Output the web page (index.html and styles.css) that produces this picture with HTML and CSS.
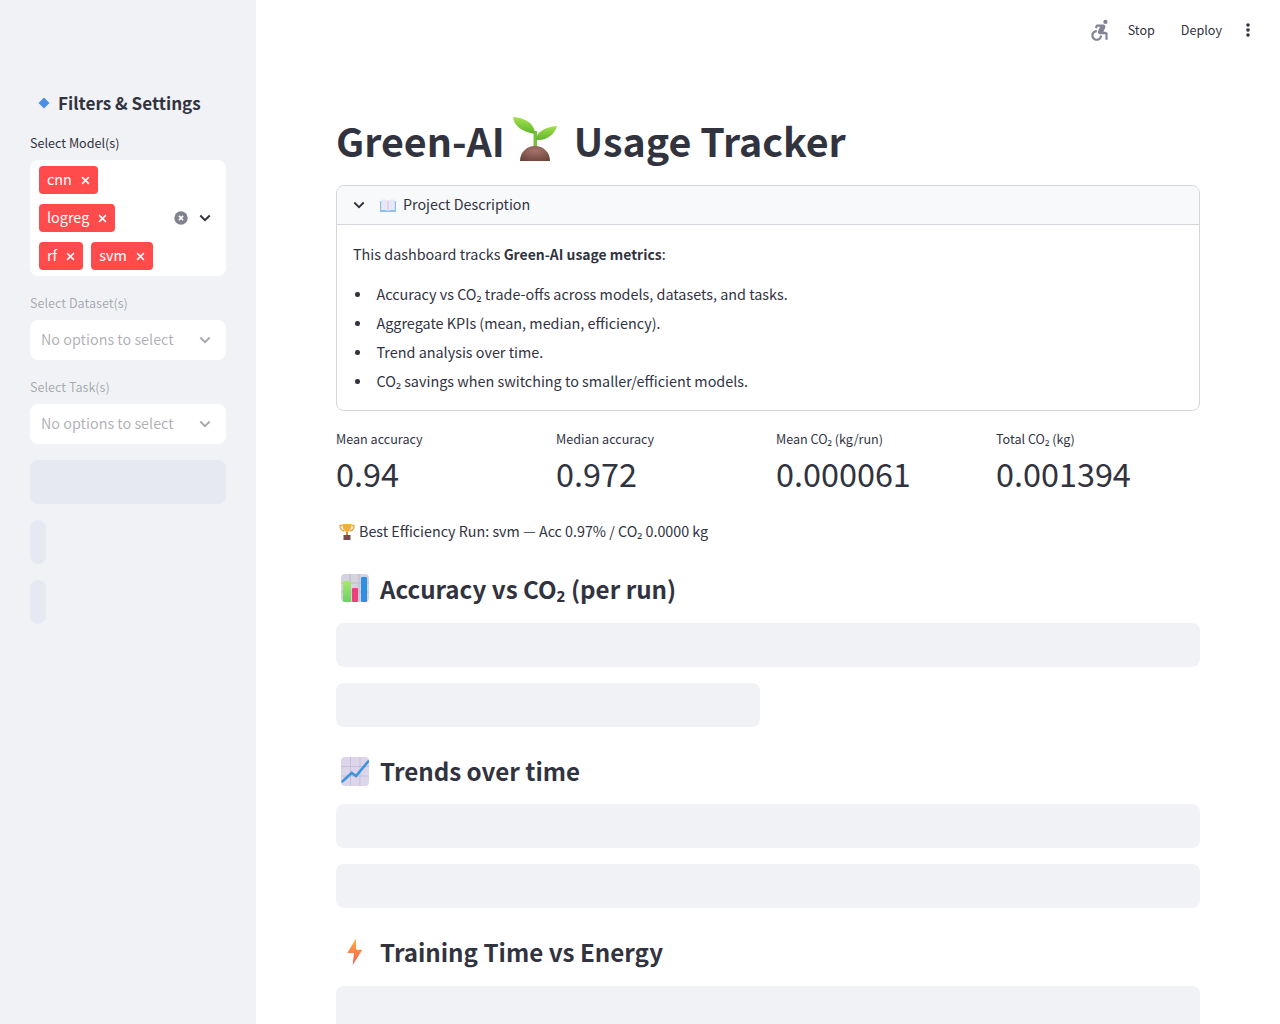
FILE: index.html
```html
<!DOCTYPE html>
<html lang="en">
<head>
    <meta charset="UTF-8">
    <title>Green-AI Usage Tracker</title>
    <link rel="stylesheet" href="styles.css">
</head>
<body>
<div class="app">
    <aside class="sidebar">
        <h2 class="side-title">
            <svg class="diamond" width="12" height="12" viewBox="0 0 12 12"><path d="M6 .5 11.500 6 6 11.500.5 6z" fill="#4a8fe7"/></svg>
            Filters &amp; Settings
        </h2>

        <div class="field">
            <label class="field-label">Select Model(s)</label>
            <div class="select select-multi">
                <div class="tags">
                    <div class="tag-row"><span class="tag">cnn<svg class="tag-x" width="9" height="9" viewBox="0 0 8 8"><path d="M1 1l6 6M7 1L1 7" stroke="#fff" stroke-width="1.300"/></svg></span></div>
                    <div class="tag-row"><span class="tag">logreg<svg class="tag-x" width="9" height="9" viewBox="0 0 8 8"><path d="M1 1l6 6M7 1L1 7" stroke="#fff" stroke-width="1.300"/></svg></span></div>
                    <div class="tag-row">
                        <span class="tag">rf<svg class="tag-x" width="9" height="9" viewBox="0 0 8 8"><path d="M1 1l6 6M7 1L1 7" stroke="#fff" stroke-width="1.300"/></svg></span>
                        <span class="tag">svm<svg class="tag-x" width="9" height="9" viewBox="0 0 8 8"><path d="M1 1l6 6M7 1L1 7" stroke="#fff" stroke-width="1.300"/></svg></span>
                    </div>
                </div>
                <svg class="clear" width="14" height="14" viewBox="0 0 14 14"><circle cx="7" cy="7" r="6.700" fill="#80828f"/><path d="M4.900 4.900l4.200 4.200M9.100 4.900l-4.200 4.200" stroke="#fff" stroke-width="1.500" fill="none"/></svg>
                <svg class="chev" width="12" height="8" viewBox="0 0 12 8"><path d="M1.300 1.500 6 6.200l4.700-4.700" stroke="#31333f" stroke-width="2" fill="none"/></svg>
            </div>
        </div>

        <div class="field disabled">
            <label class="field-label">Select Dataset(s)</label>
            <div class="select">
                <span>No options to select</span>
                <svg class="chev" width="12" height="8" viewBox="0 0 12 8"><path d="M1.300 1.500 6 6.200l4.700-4.700" stroke="#a9aab1" stroke-width="2" fill="none"/></svg>
            </div>
        </div>

        <div class="field disabled">
            <label class="field-label">Select Task(s)</label>
            <div class="select">
                <span>No options to select</span>
                <svg class="chev" width="12" height="8" viewBox="0 0 12 8"><path d="M1.300 1.500 6 6.200l4.700-4.700" stroke="#a9aab1" stroke-width="2" fill="none"/></svg>
            </div>
        </div>

        <div class="side-skeleton"></div>
        <div class="side-skeleton small"></div>
        <div class="side-skeleton small"></div>
    </aside>

    <div class="content">
        <header class="toolbar">
            <svg class="running" width="26" height="26" viewBox="0 0 24 24" fill="#808495"><circle cx="17" cy="4.540" r="2"/><path d="M14 17h-2c0 1.650-1.350 3-3 3s-3-1.350-3-3 1.350-3 3-3v-2c-2.760 0-5 2.240-5 5s2.240 5 5 5 5-2.240 5-5zm3-3.500h-1.860l1.670-3.670C17.420 8.500 16.440 7 14.960 7h-5.200c-.81 0-1.540.47-1.870 1.200L7.220 10l1.920.53L9.790 9H12l-1.830 4.100c-.6 1.330.39 2.900 1.850 2.900H17v5h2v-5.500c0-1.100-.9-2-2-2z"/></svg>
            <span class="tool stop">Stop</span>
            <span class="tool deploy">Deploy</span>
            <svg class="kebab" width="4" height="14" viewBox="0 0 4 14" fill="#31333f"><circle cx="2" cy="2" r="1.800"/><circle cx="2" cy="7" r="1.800"/><circle cx="2" cy="12" r="1.800"/></svg>
        </header>

        <main class="main">
            <h1 class="title">
                Green-AI
                <svg class="seedling" width="44" height="44" viewBox="0 0 44 44">
                    <defs>
                        <linearGradient id="leaf" x1="0" y1="0" x2="0" y2="1"><stop offset="0" stop-color="#a4e04c"/><stop offset="1" stop-color="#5fb52f"/></linearGradient>
                        <radialGradient id="soil" cx=".5" cy=".3" r=".8"><stop offset="0" stop-color="#a5746a"/><stop offset="1" stop-color="#6b4238"/></radialGradient>
                    </defs>
                    <path d="M20.500 14h3.500v18h-3.500z" fill="#79c23a"/>
                    <path d="M22 17C22 7 12 .5 0 0c1 9 9 15 22 17z" fill="url(#leaf)"/>
                    <path d="M23 23c0-8 9-13 21-14-2 8-10 15-21 14z" fill="url(#leaf)"/>
                    <path d="M7 44c0-9 7-15 15-15s15 6 15 15z" fill="url(#soil)"/>
                </svg>
                Usage Tracker
            </h1>

            <section class="expander">
                <div class="expander-head">
                    <svg width="12" height="8" viewBox="0 0 12 8"><path d="M1.300 1.500 6 6.200l4.700-4.700" stroke="#31333f" stroke-width="1.800" fill="none"/></svg>
                    <svg class="book" width="16" height="13" viewBox="0 0 16 13">
                        <path d="M0 2h16v11H0z" fill="#8cc0ec"/>
                        <path d="M1.200 .8C4 .3 6.800.6 8 1.800 9.200.6 12 .3 14.800.8v10.400c-2.800-.4-5.600-.2-6.800 1-1.200-1.200-4-1.400-6.800-1z" fill="#ebe7f6"/>
                        <path d="M7.700 1.800h.6v10.400h-.6z" fill="#b9b2cf"/>
                    </svg>
                    <span>Project Description</span>
                </div>
                <div class="expander-body">
                    <p>This dashboard tracks <strong>Green-AI usage metrics</strong>:</p>
                    <ul>
                        <li>Accuracy vs CO₂ trade-offs across models, datasets, and tasks.</li>
                        <li>Aggregate KPIs (mean, median, efficiency).</li>
                        <li>Trend analysis over time.</li>
                        <li>CO₂ savings when switching to smaller/efficient models.</li>
                    </ul>
                </div>
            </section>

            <section class="metrics">
                <div class="metric"><div class="metric-label">Mean accuracy</div><div class="metric-value">0.94</div></div>
                <div class="metric"><div class="metric-label">Median accuracy</div><div class="metric-value">0.972</div></div>
                <div class="metric"><div class="metric-label">Mean CO₂ (kg/run)</div><div class="metric-value">0.000061</div></div>
                <div class="metric"><div class="metric-label">Total CO₂ (kg)</div><div class="metric-value">0.001394</div></div>
            </section>

            <p class="best">
                <svg width="16" height="17" viewBox="0 0 16 17">
                    <path d="M3.500 2.500H1c0 3 1 5 4 5.500M12.500 2.500H15c0 3-1 5-4 5.500" stroke="#e8a33a" stroke-width="1.300" fill="none"/>
                    <path d="M3.500 1h9c0 5-1.500 7.500-4.500 8-3-.5-4.500-3-4.500-8z" fill="#f2ae3d"/>
                    <path d="M7 9h2v3H7z" fill="#d9902e"/>
                    <path d="M4.500 12h7v5h-7z" fill="#7a4a4a"/>
                </svg>
                <span>Best Efficiency Run: svm — Acc 0.97% / CO₂ 0.0000 kg</span>
            </p>

            <h2 class="section-title accuracy">
                <svg width="28" height="28" viewBox="0 0 28 28">
                    <defs><linearGradient id="bar-green" x1="0" y1="0" x2="0" y2="1"><stop offset="0" stop-color="#a8e86e"/><stop offset="1" stop-color="#6ccf62"/></linearGradient></defs>
                    <rect width="28" height="28" rx="4" fill="#d5d3de"/>
                    <path d="M0 9h28M0 18h28M9 0v28M18 0v28" stroke="#bdbbc9" stroke-width="1"/>
                    <rect x="2" y="7" width="8" height="21" rx="1" fill="url(#bar-green)"/>
                    <rect x="11" y="14" width="6" height="14" rx="1" fill="#ec3f7c"/>
                    <rect x="20" y="3" width="6" height="25" rx="1" fill="#2f8fe6"/>
                </svg>
                <span>Accuracy vs CO₂ (per run)</span>
            </h2>
            <div class="skeleton"></div>
            <div class="skeleton half"></div>

            <h2 class="section-title trends">
                <svg width="28" height="29" viewBox="0 0 28 29">
                    <rect width="28" height="29" rx="4" fill="#ddd6ea"/>
                    <path d="M0 9.500h28M0 19h28M9.500 0v29M19 0v29" stroke="#c8bfdb" stroke-width="1"/>
                    <path d="M.7 25 10.700 16 15 19 28 3.500" stroke="#3b95e0" stroke-width="2.600" fill="none"/>
                </svg>
                <span>Trends over time</span>
            </h2>
            <div class="skeleton"></div>
            <div class="skeleton"></div>

            <h2 class="section-title energy">
                <svg width="28" height="28" viewBox="0 0 28 28">
                    <defs><linearGradient id="bolt" x1="0" y1="0" x2="0" y2="1"><stop offset="0" stop-color="#ffb13d"/><stop offset="1" stop-color="#f4574f"/></linearGradient></defs>
                    <path d="M15 .5 6.300 15H13l-1.300 12 9.600-15.300H15z" fill="url(#bolt)"/>
                </svg>
                <span>Training Time vs Energy</span>
            </h2>
            <div class="skeleton"></div>
        </main>
    </div>
</div>
</body>
</html>
```

FILE: styles.css
```css
* {
    box-sizing: border-box;
}
body {
    font-family: "Noto Sans CJK SC", "Source Sans Pro", "Noto Sans", sans-serif;
    margin: 0;
    color: #31333f;
    background-color: white;
    overflow: hidden;
}
.app {
    display: flex;
    height: 100vh;
    overflow: hidden;
}

/* sidebar */
.sidebar {
    width: 256px;
    flex-shrink: 0;
    background-color: #f0f2f6;
    padding: 89px 30px 0;
}
.side-title {
    display: flex;
    align-items: center;
    gap: 8px;
    margin: 0 0 15px 8px;
    font-size: 17.1px;
    font-weight: 600;
    line-height: 28px;
}
.field {
    margin-bottom: 16px;
}
.field-label {
    display: block;
    font-size: 12.6px;
    line-height: 20px;
    padding-top: 1px;
    margin-bottom: 7px;
}
.select {
    display: flex;
    align-items: center;
    background-color: white;
    border-radius: 8px;
    height: 40px;
    padding: 0 15px 0 11px;
    font-size: 14.35px;
}
.select > span {
    flex: 1;
    margin-bottom: 3px;
}
.select-multi {
    height: 116px;
    padding-left: 9px;
}
.tags {
    flex: 1;
    display: flex;
    flex-direction: column;
    gap: 10px;
}
.tag-row {
    display: flex;
    gap: 8px;
}
.tag {
    display: flex;
    align-items: center;
    height: 28px;
    padding: 0 8px 2px 8px;
    background-color: #ff4b4b;
    color: white;
    border-radius: 4px;
    font-size: 14.4px;
    line-height: 24px;
}
.tag-x {
    margin: 2px 0 0 9px;
}
.clear {
    margin-right: 11px;
}
.disabled .field-label,
.disabled .select > span {
    color: rgba(49, 51, 63, 0.4);
}
.side-skeleton {
    height: 44px;
    background-color: #e6e9f1;
    border-radius: 8px;
    margin-bottom: 16px;
}
.side-skeleton.small {
    width: 16px;
}

/* top bar */
.content {
    flex: 1;
    min-width: 0;
}
.toolbar {
    display: flex;
    align-items: center;
    height: 60px;
    font-size: 12.6px;
}
.tool {
    margin-bottom: 2px;
}
.running {
    margin-left: auto;
    margin-right: 15px;
}
.stop {
    margin-right: 26px;
}
.deploy {
    margin-right: 24px;
}
.kebab {
    margin-right: 30px;
}

/* main column */
.main {
    padding: 52px 80px 0;
}
.title {
    display: flex;
    align-items: center;
    gap: 8px;
    margin: 0 0 17px;
    font-size: 39.4px;
    font-weight: 700;
    line-height: 56px;
    white-space: nowrap;
}
.seedling {
    margin: 0 9px 2px 0;
}
.expander {
    border: 1px solid #d5d6db;
    border-radius: 8px;
    overflow: hidden;
}
.expander-head {
    display: flex;
    align-items: center;
    height: 39px;
    padding-left: 16px;
    background-color: #f8f9fb;
    border-bottom: 1px solid #d5d6db;
    font-size: 14.3px;
}
.expander-head span {
    margin-bottom: 3px;
}
.book {
    margin: 0 7px 0 15px;
}
.expander-body {
    padding: 16px 16px 16px;
    font-size: 14.38px;
    line-height: 26px;
}
.expander-body p {
    margin: 0 0 15px;
}
.expander-body strong {
    font-weight: 600;
    font-size: 13.95px;
}
.expander-body ul {
    margin: 0;
    padding-left: 2px;
    list-style: none;
}
.expander-body li {
    display: flex;
    height: 25px;
    line-height: 23px;
    margin-bottom: 4px;
}
.expander-body li::before {
    content: "";
    width: 4.5px;
    height: 4.5px;
    margin: 10px 17px 0 0;
    border-radius: 50%;
    background-color: #31333f;
}
.expander-body li:last-child {
    margin-bottom: 0;
}
.metrics {
    display: grid;
    grid-template-columns: repeat(4, 1fr);
    column-gap: 16px;
    margin-top: 18px;
}
.metric-label {
    font-size: 12.6px;
    line-height: 20px;
    margin-bottom: 1px;
}
.metric-value {
    font-size: 32.4px;
    line-height: 46px;
}
.best {
    display: flex;
    align-items: center;
    gap: 4px;
    margin: 22px 0 0;
    padding-left: 3px;
    font-size: 14.3px;
    line-height: 26px;
}
.section-title {
    display: flex;
    align-items: center;
    gap: 11px;
    margin: 24px 0 15px 5px;
    font-size: 24.15px;
    font-weight: 600;
    line-height: 40px;
}
.section-title.accuracy {
    margin-top: 25px;
    margin-bottom: 14px;
}
.section-title.accuracy svg {
    margin-bottom: 2px;
}
.section-title.trends {
    margin-top: 24px;
    margin-bottom: 13px;
}
.section-title.energy {
    margin-top: 24px;
    margin-bottom: 14px;
}
.skeleton {
    height: 44px;
    background-color: #f0f2f6;
    border-radius: 8px;
    margin-bottom: 16px;
}
.skeleton.half {
    width: 424px;
}
```
